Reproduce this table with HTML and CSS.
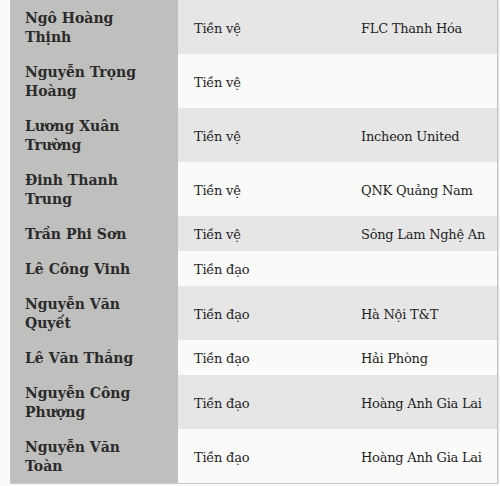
FILE: index.html
```html
<!DOCTYPE html>
<html lang="vi">
<head>
<meta charset="utf-8">
<link rel="stylesheet" href="styles.css">
</head>
<body>
<div class="wrap">
<table class="players">
<colgroup><col class="c1"><col class="c2"><col class="c3"></colgroup>
<tbody>
<tr class="odd"><th>Ngô Hoàng Thịnh</th><td>Tiền vệ</td><td>FLC Thanh Hóa</td></tr>
<tr class="even"><th>Nguyễn Trọng Hoàng</th><td>Tiền vệ</td><td></td></tr>
<tr class="odd"><th>Lương Xuân Trường</th><td>Tiền vệ</td><td>Incheon United</td></tr>
<tr class="even"><th>Đinh Thanh Trung</th><td>Tiền vệ</td><td>QNK Quảng Nam</td></tr>
<tr class="odd"><th>Trần Phi Sơn</th><td>Tiền vệ</td><td>Sông Lam Nghệ An</td></tr>
<tr class="even"><th>Lê Công Vinh</th><td>Tiền đạo</td><td></td></tr>
<tr class="odd"><th>Nguyễn Văn Quyết</th><td>Tiền đạo</td><td>Hà Nội T&amp;T</td></tr>
<tr class="even"><th>Lê Văn Thắng</th><td>Tiền đạo</td><td>Hải Phòng</td></tr>
<tr class="odd"><th>Nguyễn Công Phượng</th><td>Tiền đạo</td><td>Hoàng Anh Gia Lai</td></tr>
<tr class="even"><th>Nguyễn Văn Toàn</th><td>Tiền đạo</td><td>Hoàng Anh Gia Lai</td></tr>
</tbody>
</table>
</div>
</body>
</html>
```
FILE: styles.css
```css
html, body {
  margin: 0;
  padding: 0;
  background: #fafaf9;
}
body {
  padding-left: 10px;
  font-family: "DejaVu Serif", Georgia, serif;
  font-size: 14px;
  color: #222;
}
.wrap {
  width: 487px;
  overflow: hidden;
  border-right: 1px solid #c4c4c4;
  border-bottom: 1px solid #c8c8c8;
  box-shadow: 1px 1px 1px rgba(0,0,0,0.08);
}
.players {
  border-collapse: collapse;
  table-layout: fixed;
  width: 500px;
}
.c1 { width: 168px; }
.c2 { width: 167px; }
.c3 { width: 165px; }
.players th,
.players td {
  padding: 9px 0 7px 16px;
  line-height: 19px;
  text-align: left;
  vertical-align: middle;
}
.players td {
  font-size: 13px;
  letter-spacing: -0.25px;
  color: #1f1f1f;
}
.players th {
  padding-left: 15px;
  padding-right: 20px;
  background: #bfbfbd;
  font-weight: bold;
  color: #2b2b2b;
}
.players td:last-child {
  white-space: nowrap;
}
.odd td { background: #e6e6e6; }
.even td { background: #fafaf9; }
```
